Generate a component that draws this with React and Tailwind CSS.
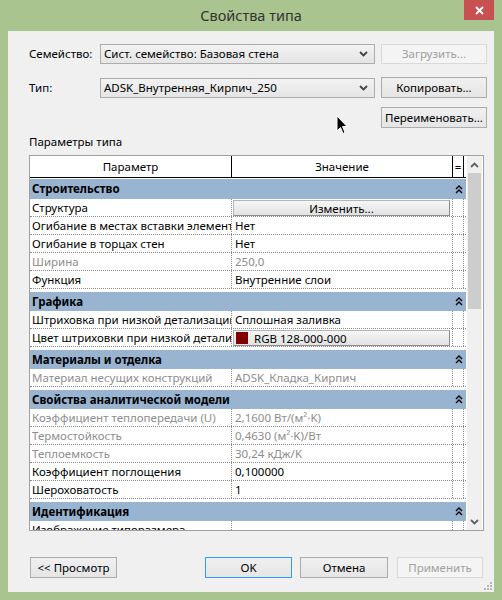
import React from "react";

const sections = [
  {
    title: "Строительство",
    rows: [
      { p: "Структура", button: "Изменить..." },
      { p: "Огибание в местах вставки элементов", v: "Нет" },
      { p: "Огибание в торцах стен", v: "Нет" },
      { p: "Ширина", v: "250,0", dis: true },
      { p: "Функция", v: "Внутренние слои" },
    ],
  },
  {
    title: "Графика",
    rows: [
      { p: "Штриховка при низкой детализации", v: "Сплошная заливка" },
      { p: "Цвет штриховки при низкой детализации", color: "RGB 128-000-000" },
    ],
  },
  {
    title: "Материалы и отделка",
    rows: [{ p: "Материал несущих конструкций", v: "ADSK_Кладка_Кирпич", dis: true }],
  },
  {
    title: "Свойства аналитической модели",
    rows: [
      { p: "Коэффициент теплопередачи (U)", v: "2,1600 Вт/(м²·K)", dis: true },
      { p: "Термостойкость", v: "0,4630 (м²·K)/Вт", dis: true },
      { p: "Теплоемкость", v: "30,24 кДж/K", dis: true },
      { p: "Коэффициент поглощения", v: "0,100000" },
      { p: "Шероховатость", v: "1" },
    ],
  },
  {
    title: "Идентификация",
    rows: [{ p: "Изображение типоразмера", v: "" }],
  },
];

function ComboArrow() {
  return (
    <svg width="9" height="6" viewBox="0 0 9 6" className="shrink-0">
      <path d="M1 1 L4.5 4.5 L8 1" fill="none" stroke="#444" strokeWidth="1.8" />
    </svg>
  );
}

function Combo({ text }) {
  return (
    <div className="flex h-[20px] w-[275px] items-center justify-between border border-[#acacac] bg-linear-to-b from-[#f2f2f2] to-[#e5e5e5] pl-[3px] pr-[6px] text-[11.5px] text-black">
      <span className="whitespace-nowrap">{text}</span>
      <ComboArrow />
    </div>
  );
}

function Button({ children, className = "", disabled, focused }) {
  return (
    <div
      className={
        "flex items-center justify-center border text-[11.5px] " +
        (disabled
          ? "border-[#d9d9d9] bg-[#f4f4f4] text-[#a0a0a0] "
          : focused
          ? "border-[#3399ff] bg-linear-to-b from-[#f0f0f0] to-[#e5e5e5] text-black "
          : "border-[#acacac] bg-linear-to-b from-[#f0f0f0] to-[#e5e5e5] text-black ") +
        className
      }
    >
      {children}
    </div>
  );
}

function Collapse() {
  return (
    <svg width="8" height="9" viewBox="0 0 8 9">
      <path d="M1 4 L4 1 L7 4 M1 8 L4 5 L7 8" fill="none" stroke="#000" strokeWidth="1.4" />
    </svg>
  );
}

function SectionRow({ title, first }) {
  return (
    <div
      className={
        "flex shrink-0 bg-[#99b4d1] border-white " +
        (first ? "h-[21px] border-t-[1px]" : "h-[22px] border-t-[3px]")
      }
    >
      <div className="flex flex-1 items-center pl-[2px] text-[11.5px] font-bold text-black">{title}</div>
      <div className="flex w-[14px] items-center justify-center">
        <Collapse />
      </div>
    </div>
  );
}

function Row({ row }) {
  const tc = row.dis ? "text-[#8d8d8d]" : "text-black";
  return (
    <div className="flex h-[18px] shrink-0 border-b border-dotted border-[#8a8a8a] bg-white text-[11.5px]">
      <div className={"w-[202px] shrink-0 overflow-hidden whitespace-nowrap border-r border-dotted border-[#8a8a8a] pl-[2px] leading-[17px] " + tc}>
        {row.p}
      </div>
      <div className={"w-[220px] shrink-0 overflow-hidden whitespace-nowrap leading-[17px] " + tc}>
        {row.button ? (
          <div className="ml-[1px] mt-[1px] flex h-[16px] w-[217px] items-center justify-center border border-[#b4b4b4] border-r-[#8c8c8c] border-b-[#8c8c8c] bg-linear-to-b from-[#f6f6f6] to-[#e2e2e2] text-black">
            {row.button}
          </div>
        ) : row.color ? (
          <div className="ml-[1px] mt-[1px] flex h-[16px] w-[217px] items-center gap-[6px] border border-[#b4b4b4] border-r-[#8c8c8c] border-b-[#8c8c8c] bg-linear-to-b from-[#f6f6f6] to-[#e2e2e2] pl-[2px] text-black">
            <span className="h-[12px] w-[12px] bg-[#800000]" />
            {row.color}
          </div>
        ) : (
          <span className="pl-[3px]">{row.v}</span>
        )}
      </div>
      <div className="w-[12px] shrink-0 border-l border-r border-dotted border-[#8a8a8a]" />
    </div>
  );
}

function ScrollArrow({ down }) {
  return (
    <div className="flex h-[17px] shrink-0 items-center justify-center">
      <svg width="9" height="6" viewBox="0 0 9 6">
        <path
          d={down ? "M1 1 L4.5 4.5 L8 1" : "M1 5 L4.5 1.5 L8 5"}
          fill="none"
          stroke="#606060"
          strokeWidth="1.8"
        />
      </svg>
    </div>
  );
}

export default function App() {
  return (
    <div className="relative flex h-[600px] w-[502px] flex-col overflow-hidden bg-[#a9c48f] font-['Noto_Sans',sans-serif]">
      <div className="flex h-[31px] shrink-0 items-center justify-center text-[14.5px] text-[#333]">
        Свойства типа
      </div>
      <div className="absolute right-[8px] top-0 flex h-[20px] w-[30px] items-center justify-center bg-[#c75050]">
        <svg width="9" height="9" viewBox="0 0 9 9">
          <path d="M1 1 L8 8 M8 1 L1 8" stroke="#fff" strokeWidth="1.8" />
        </svg>
      </div>

      <div className="relative mx-[8px] mb-[8px] flex flex-1 flex-col bg-[#f0f0f0] pl-[21px]">
        <div className="mt-[13px] flex items-center">
          <div className="w-[71px] text-[11.5px] text-black">Семейство:</div>
          <Combo text="Сист. семейство: Базовая стена" />
          <Button disabled className="ml-[6px] h-[20px] w-[106px]">Загрузить...</Button>
        </div>
        <div className="mt-[13px] flex items-center">
          <div className="w-[71px] text-[11.5px] text-black">Тип:</div>
          <Combo text="ADSK_Внутренняя_Кирпич_250" />
          <Button className="ml-[6px] h-[21px] w-[106px]">Копировать...</Button>
        </div>
        <div className="mt-[9px] flex">
          <Button className="ml-[352px] h-[21px] w-[106px]">Переименовать...</Button>
        </div>
        <div className="mt-[5px] h-[17px] text-[11.5px] leading-[17px] text-black">Параметры типа</div>

        <div className="mt-[5px] flex h-[376px] w-[455px] border border-[#a0a0a0] bg-white">
          <div className="flex w-[436px] flex-col overflow-hidden">
            <div className="flex h-[22px] shrink-0 border-b border-black bg-white text-[11.5px] text-black">
              <div className="flex w-[202px] items-center justify-center border-r border-black">Параметр</div>
              <div className="flex w-[220px] items-center justify-center">Значение</div>
              <div className="flex w-[12px] items-center justify-center border-l border-r border-black">=</div>
            </div>
            {sections.map((s, i) => (
              <React.Fragment key={s.title}>
                <SectionRow title={s.title} first={i === 0} />
                {s.rows.map((r) => (
                  <Row key={r.p} row={r} />
                ))}
              </React.Fragment>
            ))}
          </div>
          <div className="ml-[1px] flex w-[15px] flex-col bg-[#f0f0f0]">
            <ScrollArrow />
            <div className="mx-[1px] h-[136px] shrink-0 bg-[#cdcdcd]" />
            <div className="flex-1" />
            <ScrollArrow down />
          </div>
        </div>

        <div className="mt-[26px] flex items-center">
          <Button className="ml-[1px] h-[21px] w-[87px]">&lt;&lt; Просмотр</Button>
          <Button focused className="ml-[88px] h-[21px] w-[87px]">OK</Button>
          <Button className="ml-[8px] h-[21px] w-[88px]">Отмена</Button>
          <Button disabled className="ml-[9px] h-[21px] w-[86px]">Применить</Button>
        </div>

        <svg className="absolute bottom-[2px] right-[2px]" width="8" height="8" viewBox="0 0 8 8">
          <rect x="6" y="0" width="2" height="2" fill="#b8b8b8" />
          <rect x="3" y="3" width="2" height="2" fill="#b8b8b8" />
          <rect x="6" y="3" width="2" height="2" fill="#b8b8b8" />
          <rect x="0" y="6" width="2" height="2" fill="#b8b8b8" />
          <rect x="3" y="6" width="2" height="2" fill="#b8b8b8" />
          <rect x="6" y="6" width="2" height="2" fill="#b8b8b8" />
        </svg>
      </div>

      <svg className="absolute left-[336px] top-[115px]" width="13" height="21" viewBox="0 0 13 21">
        <path d="M1 1 L1 16 L4.5 12.5 L7 18.5 L9 17.5 L6.5 11.5 L11 11.5 Z" fill="#000" stroke="#fff" strokeWidth="1" />
      </svg>
    </div>
  );
}
